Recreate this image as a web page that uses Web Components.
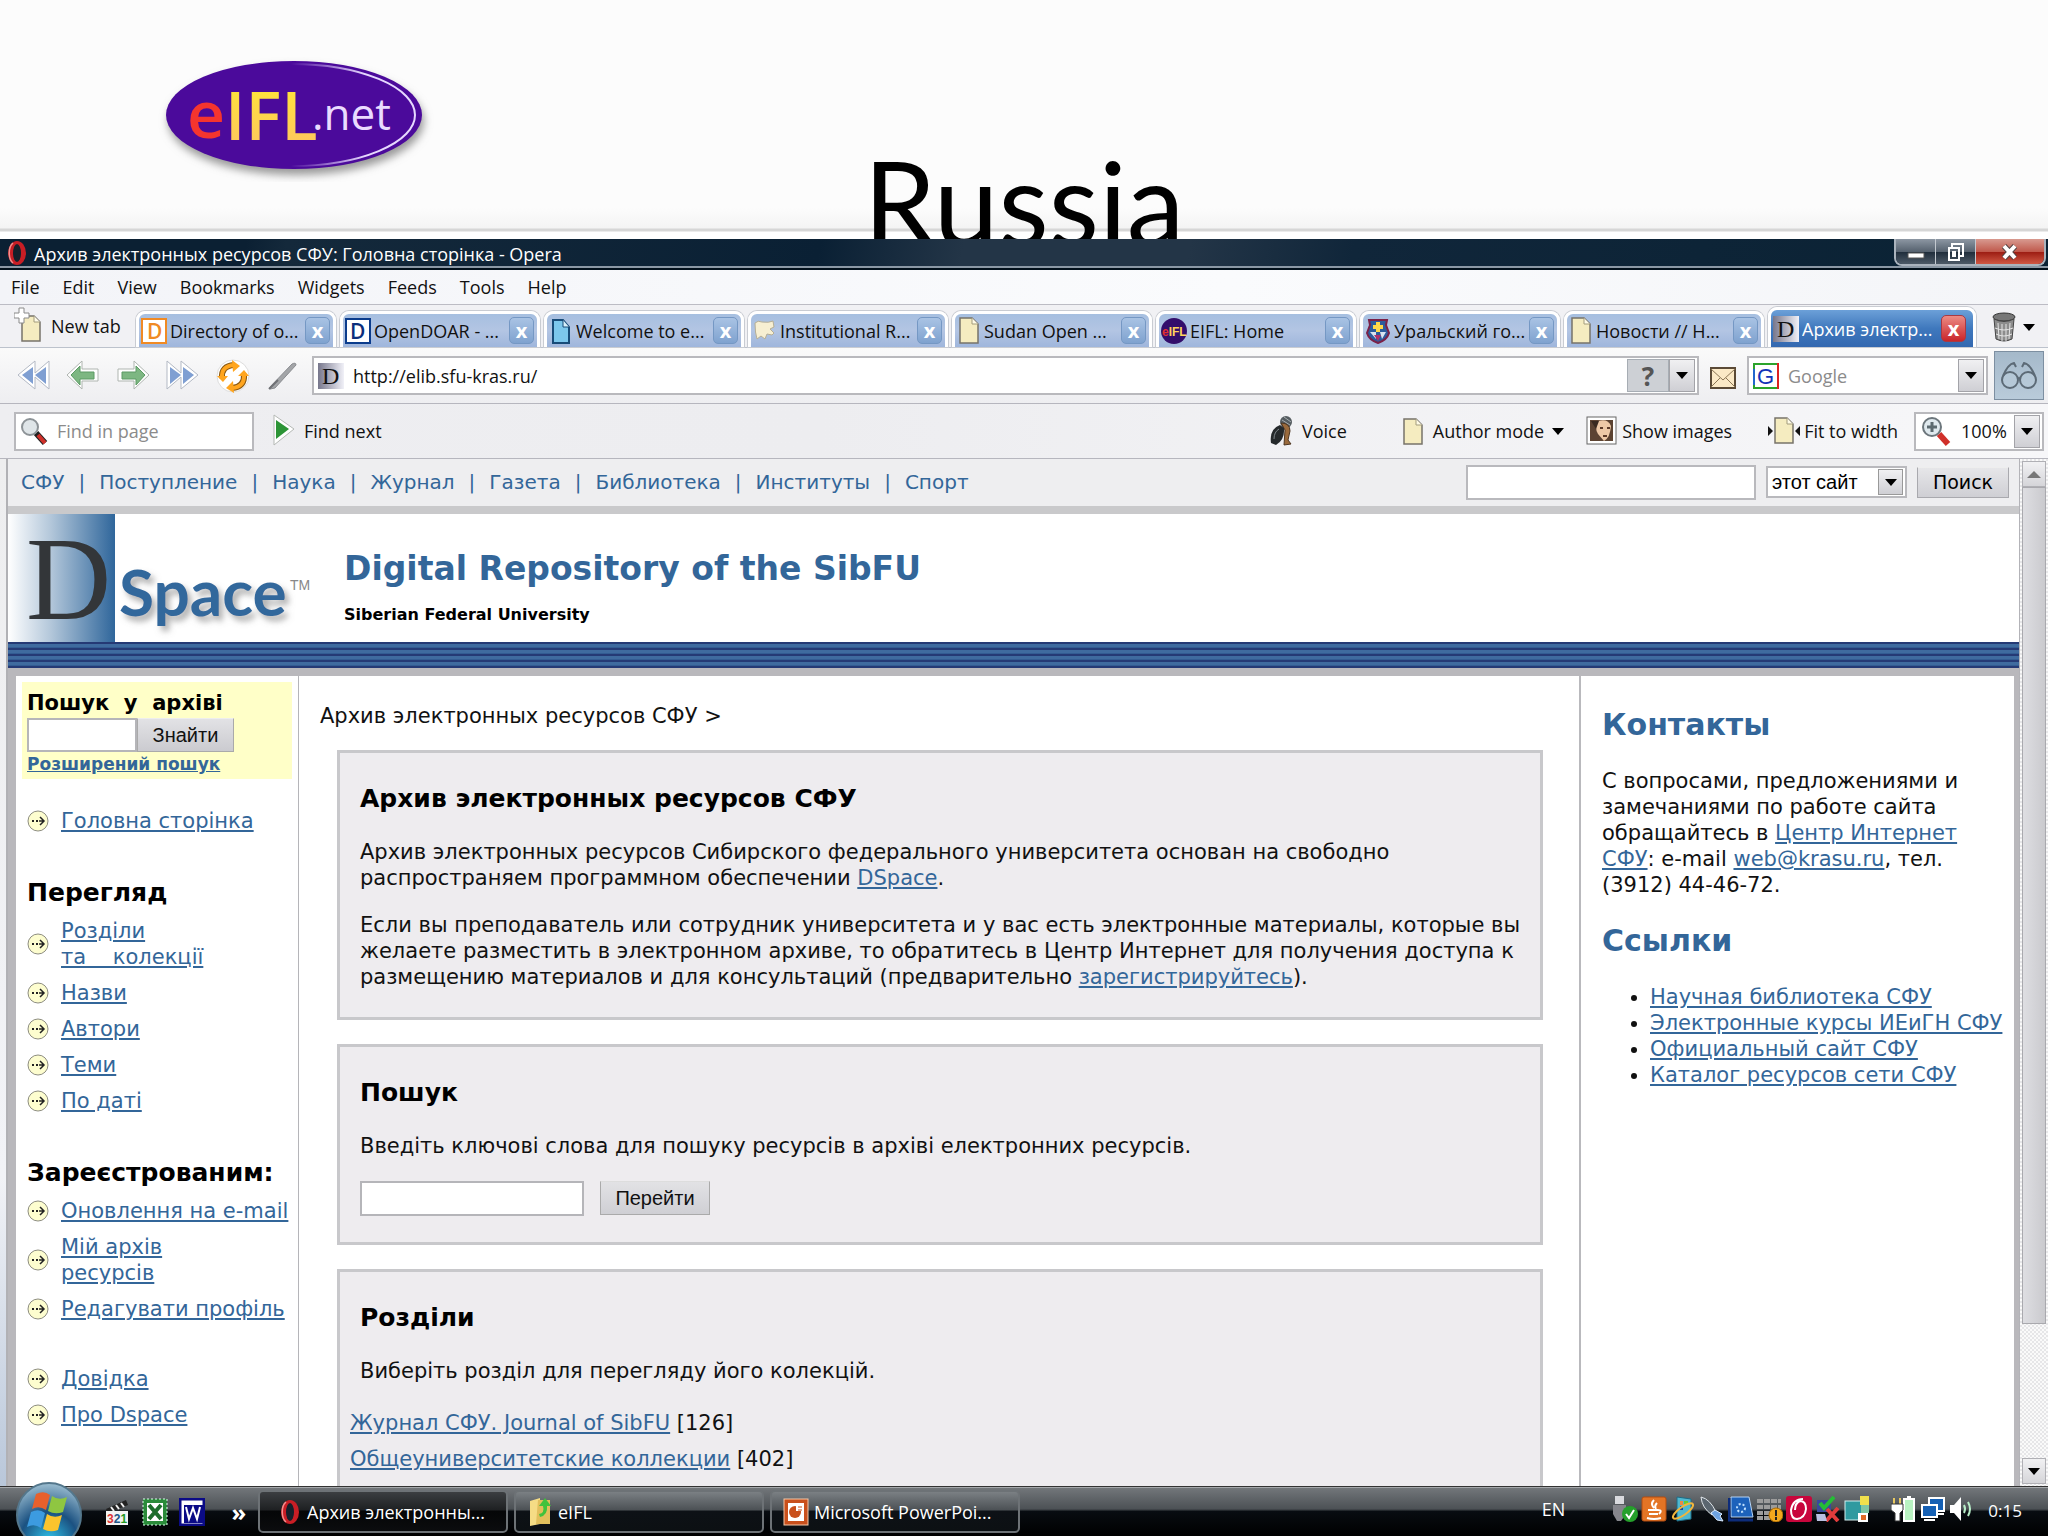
<!DOCTYPE html>
<html lang="uk">
<head>
<meta charset="utf-8">
<title>Russia</title>
<style>
  html, body {
    margin: 0;
    height: 100%;
  }
  body {
    display: flex;
    flex-direction: column;
    overflow: hidden;
    background: #fcfcfc;
    font: 18px "Open Sans", "Noto Sans", sans-serif;
    color: #111;
  }
</style>
</head>
<body>
<slide-banner>Russia</slide-banner>
<opera-window caption="Архив электронных ресурсов СФУ: Головна сторінка - Opera">
  <repo-page></repo-page>
</opera-window>
<task-bar></task-bar>

<script>
const PAGE = `<path d="M3 2h12l6 6v19H3z" fill="#f5ecc0" stroke="#77736a" stroke-width="1.5"/><path d="M15 2v6h6" fill="#fffbe6" stroke="#a39c7c"/>`;

// name: [width, height, markup]
const ICONS = {
  opera: [24, 28, `<ellipse cx="12" cy="14" rx="9" ry="12" fill="#c81e25"/><ellipse cx="12" cy="14" rx="4" ry="9" fill="#15202b"/><path d="M8 4C3 8 3 20 8 24" fill="none" stroke="#f2908f" stroke-width="1.5"/>`],
  page: [24, 29, PAGE],
  newtab: [30, 38, `<g transform="translate(5 7)">${PAGE}</g><path d="M5 1h5v5h5v5h-5v5H5v-5H0V6h5z" fill="#fff" stroke="#8a8a8a"/>`],
  doaj: [26, 26, `<rect x="1" y="1" width="24" height="24" fill="#fff" stroke="#f08a24" stroke-width="2"/><text x="6" y="21" font-family="Open Sans" font-weight="600" font-size="21" fill="#f08a24">D</text>`],
  doar: [26, 26, `<rect x="1" y="1" width="24" height="24" fill="#fff" stroke="#0b3c8c" stroke-width="2"/><text x="5" y="21" font-family="Open Sans" font-weight="600" font-size="21" fill="#0b2f7c">D</text>`],
  bluepage: [24, 26, `<path d="M4 2h10l6 7v16H4z" fill="#7cc7ec" stroke="#174b78" stroke-width="2"/><path d="M14 2v7h6" fill="#d8f1fc" stroke="#174b78"/>`],
  scroll: [24, 24, `<path d="M2 4q3-3 7-1 7 1 11-1l1 6-4 2 4 4-2 2-5-1-2 5-4-3-4 3q-2-6-2-16z" fill="#f7efd2" stroke="#b5ae96"/>`],
  eifl: [26, 26, `<ellipse cx="13" cy="13" rx="13" ry="13" fill="#330e6b"/><text x="1" y="18" font-family="Liberation Sans" font-weight="bold" font-size="12" fill="#e03030">e<tspan fill="#ffd45c">IFL</tspan></text>`],
  crest: [26, 26, `<path d="M4 2h18l-1 5 3 8q-2 7-11 10Q4 22 2 15l3-8z" fill="#2c5c9c" stroke="#7a2148" stroke-width="2"/><path d="M11 4h4v3h3v4h-3v3h-4v-3H8V7h3z" fill="#ffd84a"/><path d="M5 14h6v7zM15 14h6l-4 7z" fill="#d9e4f0"/><path d="M9 17h7l-3 6z" fill="#b0306a"/>`],
  dspace: [26, 26, `<defs><linearGradient id="d"><stop stop-color="#77778c"/><stop offset="1" stop-color="#f1f1f8"/></linearGradient></defs><rect width="26" height="26" fill="url(#d)"/><text x="4" y="21" font-family="Liberation Serif" font-size="24" fill="#111">D</text>`],
  trash: [26, 32, `<ellipse cx="13" cy="6" rx="11" ry="4" fill="#777" stroke="#333"/><path d="M3 8l2 20q8 4 16 0l2-20q-10 5-20 0z" fill="#8c8c8c" stroke="#444"/><path d="M7 12l1 16M11 13v17M15 13v17M19 12l-1 16M4 17q9 4 18 0M5 23q8 4 16 0" stroke="#e4e4e4" fill="none"/>`],
  rewind: [36, 38, `<path d="M34 2v28L20 18v12L3 16 20 2v12z" fill="#fff" stroke="#b3b9c4"/><path d="M18 8v17L7 16zM31 8v17L20 16z" fill="#7f9fd2"/>`],
  forward: [36, 38, `<path d="M2 2v28l14-12v12l17-14L16 2v12z" fill="#fff" stroke="#b3b9c4"/><path d="M18 8v17l11-9zM5 8v17l11-9z" fill="#7f9fd2"/>`],
  back: [36, 38, `<path d="M2 16L17 2v8h16v12H17v8z" fill="#fff" stroke="#afb5b0"/><path d="M6 16l9-9v6h14v7H15v6z" fill="#7db782" stroke="#5c9a64"/>`],
  next: [36, 38, `<path d="M34 16L19 2v8H3v12h16v8z" fill="#fff" stroke="#afb5b0"/><path d="M30 16l-9-9v6H7v7h14v6z" fill="#7db782" stroke="#5c9a64"/>`],
  reload: [36, 38, `<circle cx="18" cy="17" r="16" fill="#fff" stroke="#ddd"/><path d="M7 19q-1-12 12-13M29 15q1 13-12 14" fill="none" stroke="#8b5a14" stroke-width="6"/><path d="M7 19q-1-12 12-13M29 15q1 13-12 14" fill="none" stroke="#ffa51e" stroke-width="4"/><path d="M17 1l8 6-7 6zM19 34l-8-5 7-7zM2 17h11l-5 6zM34 17H23l6-6z" fill="#ffa51e"/>`],
  pen: [36, 38, `<path d="M5 28L27 5q4-2 4 1L10 29l-5 1z" fill="#a3a5a8" stroke="#8a8c90"/><path d="M4 30l9-9" stroke="#6f7175" stroke-width="2"/>`],
  mail: [26, 22, `<rect x="1" y="1" width="24" height="20" fill="#fbe9c6" stroke="#5b4a36" stroke-width="2"/><path d="M1 2l12 11L25 2M1 20l9-9M25 20l-9-9" fill="none" stroke="#8b7554"/>`],
  google: [26, 26, `<rect x="1" y="1" width="24" height="24" fill="#fff" stroke="#2ba32b" stroke-width="2"/><path d="M25 0v26" stroke="#d22" stroke-width="2"/><path d="M1 6v16" stroke="#26c" stroke-width="2"/><text x="4" y="21" font-family="Liberation Sans" font-size="22" fill="#1232b8">G</text>`],
  glasses: [38, 30, `<g fill="#b8cad8" fill-opacity=".7" stroke="#5c6a76" stroke-width="2"><circle cx="10" cy="19" r="8"/><circle cx="28" cy="19" r="8"/></g><path d="M18 18q1-2 2 0M3 15Q8 3 14 2l2 4M35 15Q30 3 24 2l-2 4" fill="none" stroke="#5c6a76" stroke-width="2"/>`],
  search: [28, 28, `<path d="M16 16l9 10" stroke="#222" stroke-width="6"/><path d="M18 18l7 8" stroke="#d0302a" stroke-width="4"/><circle cx="10" cy="10" r="8" fill="#dfe5e8" stroke="#8d9397" stroke-width="2"/>`],
  zoomin: [32, 32, `<path d="M19 19l9 10" stroke="#d0302a" stroke-width="6"/><circle cx="12" cy="12" r="9" fill="#dfe9ee" stroke="#6c767c" stroke-width="2"/><path d="M12 7v10M7 12h10" stroke="#5c6a70" stroke-width="3"/>`],
  play: [24, 34, `<path d="M2 1l20 14L2 31z" fill="#fff" stroke="#b5b9b5"/><path d="M4 6l13 9L4 25z" fill="#2c9436"/>`],
  voice: [26, 32, `<circle cx="18" cy="7" r="6" fill="#555c60"/><path d="M14 5l8 5M16 2l7 5" stroke="#a5abae"/><path d="M13 8q9 0 9 8l-2 9 3 4-7 1 1-15z" fill="#9a6a3c" stroke="#4d3520"/><path d="M3 28q-2-14 9-18l4 3q1 12-8 17z" fill="#25292b"/><path d="M6 24q0-7 5-10" stroke="#7c8488" fill="none"/>`],
  photo: [32, 30, `<rect x="1" y="1" width="29" height="27" fill="#fff" stroke="#666"/><rect x="4" y="4" width="23" height="21" fill="#5c4332"/><path d="M12 5q10-3 13 5-1 12-7 15l-6-7q-4-7 0-13z" fill="#eec9a6"/><path d="M5 5h8l-3 8z" fill="#3a2a20"/><path d="M14 12h3M21 12h3M17 20h4" stroke="#5c3a28" stroke-width="2"/>`],
  fit: [32, 30, `<path d="M0 10l5 5-5 5zM32 10l-5 5 5 5z" fill="#111"/><g transform="translate(4 0)">${PAGE}</g>`],
  bullet: [22, 22, `<circle cx="11" cy="11" r="10" fill="#fdfdcf" stroke="#8d8d80"/><path d="M5 11h2M9 11h2" stroke="#222" stroke-width="2"/><path d="M12 11h4M13 7l4 4-4 4" stroke="#222" stroke-width="1.5" fill="none"/>`],
  clapper: [28, 30, `<path d="M3 12l20-9 2 5-20 8z" fill="#222"/><path d="M8 10l3 4M13 8l3 4M18 6l3 4" stroke="#eee" stroke-width="2"/><rect x="3" y="14" width="22" height="14" fill="#f3f3f3"/><text x="4" y="26" font-family="Liberation Sans" font-weight="bold" font-size="12" fill="#d33">3<tspan fill="#258">2</tspan><tspan fill="#292">1</tspan></text>`],
  excel: [26, 28, `<rect x="1" y="1" width="24" height="26" fill="#2b8b3a" stroke="#dfe" stroke-dasharray="2 2"/><rect x="5" y="5" width="16" height="18" fill="#fff"/><path d="M7 7l12 14M19 7L7 21" stroke="#1d6d2b" stroke-width="4"/>`],
  word: [26, 28, `<rect x="1" y="1" width="24" height="26" fill="#fff" stroke="#0b0b86" stroke-width="3"/><rect x="5" y="7" width="19" height="18" fill="#0b0b86"/><path d="M7 9l3 12 4-11 4 11 3-12" fill="none" stroke="#fff" stroke-width="2"/>`],
  folder: [26, 32, `<path d="M3 5l10-3v26l-10 2z" fill="#f5dc85"/><path d="M11 4h12v24H9z" fill="#e2bf5c"/><path d="M12 18q6-1 4-8h-4l6-8 6 8h-4q1 9-7 11z" fill="#40c23c"/>`],
  ppt: [26, 28, `<rect x="1" y="1" width="24" height="26" fill="#c9501c" stroke="#f4c7a8"/><rect x="5" y="5" width="16" height="18" fill="#fff"/><circle cx="12" cy="14" r="6" fill="#c9501c"/><path d="M13 13V6q6 1 6 7z" fill="#fff"/><path d="M15 9h4M15 12h4" stroke="#c9501c"/>`],
  usb: [26, 26, `<path d="M3 0h9v8H3z" fill="#d9dade"/><path d="M1 9h13v9l-5 7H5l-4-7z" fill="#85868c"/><circle cx="18" cy="18" r="8" fill="#25a02b"/><path d="M14 18l3 4 5-8" fill="none" stroke="#fff" stroke-width="2"/>`],
  java: [26, 26, `<rect x="1" y="1" width="24" height="24" rx="2" fill="#e37425" stroke="#b44d10"/><path d="M13 4q-4 4 0 8M16 7q-3 3-1 6M7 14h10q5 0 1 4M8 18h9M6 22q7 2 14 0" fill="none" stroke="#fff" stroke-width="2"/>`],
  update: [26, 26, `<path d="M7 1l14 2v20l-14 2z" fill="#50b8d0" stroke="#1c6c86"/><path d="M10 5h3v4h-3z" fill="#e84"/><path d="M14 5h4v4h-4z" fill="#6c3"/><path d="M10 10h3v4h-3z" fill="#249"/><ellipse cx="13" cy="15" rx="12" ry="4" transform="rotate(-35 13 15)" fill="none" stroke="#f0b53d" stroke-width="2"/>`],
  rocket: [26, 26, `<path d="M2 1q9 2 15 15l-4 3Q3 12 2 1z" fill="#5b6670" stroke="#dfe5ea"/><path d="M16 14l7 4-2 2 3 5-6-1-6-7z" fill="#6ea3e2" stroke="#dcecff"/>`],
  chip: [26, 26, `<path d="M3 1h18l4 20H3z" fill="#1d62bb" stroke="#b6d3f4"/><path d="M1 2v22h24" fill="none" stroke="#0d2c7a" stroke-width="3"/><circle cx="13" cy="12" r="4" fill="none" stroke="#bfe0ff" stroke-dasharray="2 2" stroke-width="2"/>`],
  firewall: [26, 26, `<path d="M0 5h24M0 11h24M0 17h20M0 22h16" stroke="#9c9c9c" stroke-width="4" stroke-dasharray="6 1"/><circle cx="19" cy="19" r="7" fill="#f2a71d" stroke="#a86804"/><path d="M19 14v6M19 21v3" stroke="#222" stroke-width="2"/>`],
  avira: [26, 26, `<rect width="26" height="26" rx="3" fill="#c8063c"/><path d="M17 3Q7 3 5 14q0 9 6 9 8-1 9-10 0-8-6-8-5 2-5 9" fill="none" stroke="#fff" stroke-width="2"/>`],
  sync: [26, 26, `<path d="M2 4h14v12H2z" fill="#39499b"/><path d="M5 7l4 5L19 1" fill="none" stroke="#25bd36" stroke-width="4"/><path d="M12 13l11 12M23 12L11 25" stroke="#e23c3c" stroke-width="4"/><path d="M1 18h9l2 7H2z" fill="#b9bfe0"/>`],
  gadget: [26, 26, `<rect x="1" y="5" width="17" height="19" fill="#2f9aa0" stroke="#d4efef"/><rect x="16" y="0" width="9" height="9" fill="#f0e04c"/><rect x="17" y="9" width="8" height="8" fill="#7fc7a4"/><rect x="14" y="17" width="10" height="9" fill="#fff"/><rect x="17" y="19" width="5" height="5" fill="#e06a26"/>`],
  power: [26, 26, `<rect x="13" y="3" width="10" height="22" fill="#b9f3c2" stroke="#fff" stroke-width="2"/><path d="M16 0h4v3h-4z" fill="#fff"/><path d="M3 2v6M9 2v6" stroke="#e8c860" stroke-width="2"/><path d="M0 8h12v6l-3 3v8H4v-8l-4-3z" fill="#fff" stroke="#333"/>`],
  network: [26, 26, `<g fill="#1560b4" stroke="#fff" stroke-width="2"><rect x="9" y="2" width="15" height="13"/><rect x="2" y="9" width="15" height="12"/></g><path d="M4 24h11M18 18h6" stroke="#fff" stroke-width="2"/>`],
  sound: [26, 26, `<path d="M1 9h4l7-8v24l-7-8H1z" fill="#fff"/><path d="M15 9q2 4 0 8M19 6q4 7 0 14" fill="none" stroke="#b9efc9" stroke-width="2"/>`]
};

// shared by every element below
const BASE = `
  <style>
    * { box-sizing: border-box; }
    button, input, select { font: inherit; color: inherit; margin: 0; border-radius: 0; }
    button { padding: 0; border: 0; background: none; white-space: nowrap; }
    input::placeholder { color: #8b8b8b; opacity: 1; }
    .arrow::before {
      content: "";
      display: block;
      margin: auto;
      width: 0;
      border: 6px solid transparent;
      border-top: 7px solid #000;
      border-bottom: 0;
    }
  </style>`;

function define(name, render) {
  customElements.define(name, class extends HTMLElement {
    connectedCallback() {
      if (this.shadowRoot) return;
      this.attachShadow({ mode: "open" });
      this.shadowRoot.innerHTML = BASE + render(this);
    }
  });
}

define("ui-icon", el => {
  const [w, h, markup] = ICONS[el.getAttribute("name")];
  return `
    <style>
      :host { display: inline-flex; flex: none; }
      svg { display: block; }
    </style>
    <svg width="${w}" height="${h}" viewBox="0 0 ${w} ${h}" aria-hidden="true">${markup}</svg>`;
});

define("slide-banner", () => `
  <style>
    :host {
      display: grid;
      grid-template-columns: 1fr auto 1fr;
      flex: none;
      height: 239px;
      overflow: hidden;
      background: linear-gradient(#fcfcfc 0 208px, #f4f4f4 228px, #d6d6d6 229px 231px, #fff 232px);
    }
    .logo { margin: 52px 0 0 158px; }
    h1 {
      margin: 0;
      padding-top: 138px;
      font: 400 116px/128px Lato, sans-serif;
      color: #000;
    }
  </style>
  <div class="logo">
    <svg width="280" height="130" viewBox="0 0 280 130" role="img" aria-label="eIFL.net">
      <defs>
        <filter id="soft"><feGaussianBlur stdDeviation="4"/></filter>
        <linearGradient id="rim"><stop offset=".5" stop-color="#e6d8ff" stop-opacity="0"/><stop offset=".8" stop-color="#e6d8ff"/></linearGradient>
        <linearGradient id="gold" x2="0" y2="1"><stop stop-color="#ffec2e"/><stop offset="1" stop-color="#ffc067"/></linearGradient>
      </defs>
      <ellipse cx="138" cy="69" rx="128" ry="54" fill="#999" filter="url(#soft)"/>
      <ellipse cx="136" cy="63" rx="128" ry="54" fill="#4b0a9b"/>
      <ellipse cx="133" cy="63" rx="124" ry="51" fill="none" stroke="url(#rim)" stroke-width="2"/>
      <g font-family="Open Sans">
        <text x="29" y="86" font-size="66" font-weight="600" fill="#f5352e">e</text>
        <text x="67" y="88" font-size="67" font-weight="600" fill="url(#gold)">IFL</text>
        <text x="154" y="78" font-size="44" font-weight="500" fill="#eadbff">.net</text>
      </g>
    </svg>
  </div>
  <h1><slot></slot></h1>`);

define("browser-tab", el => `
  <style>
    :host { display: flex; flex: 1 1 0; min-width: 0; }
    :host([active]) { flex-grow: 1.04; }
    .tab {
      display: flex;
      align-items: center;
      gap: 3px;
      flex: 1;
      min-width: 0;
      height: 36px;
      padding: 0 3px 0 2px;
      border: solid #fff;
      border-width: 3px 3px 0;
      border-radius: 9px 9px 0 0;
      background: linear-gradient(#a6bfe0, #b3c5e3 50%, #9fb6dc);
      box-shadow: 0 0 0 1px #c9ccd2;
    }
    :host([active]) .tab {
      height: 40px;
      padding-right: 7px;
      background: linear-gradient(#6ca0d8, #3f78bd 50%, #3368b0);
      color: #fff;
    }
    .label { flex: 1; overflow: hidden; white-space: nowrap; }
    button {
      width: 25px;
      height: 27px;
      border: 1px solid #7598c4;
      border-radius: 5px;
      background: linear-gradient(#a9c3e4, #7fa2cf);
      color: #fff;
      font: bold 20px/22px "Open Sans", sans-serif;
    }
    :host([active]) button { background: linear-gradient(#ec8b84, #c9252a); border-color: #a83a44; }
  </style>
  <div class="tab">
    <ui-icon name="${el.getAttribute("icon")}"></ui-icon>
    <span class="label">${el.getAttribute("label")}</span>
    <button aria-label="Close tab">x</button>
  </div>`);

define("opera-window", el => `
  <style>
    :host { display: flex; flex-direction: column; flex: 1; min-height: 0; background: #f1f1f4; }
    .title {
      display: flex;
      flex: none;
      height: 31px;
      padding-left: 5px;
      gap: 5px;
      background: linear-gradient(100deg, #0b2033 0 12%, #14293b 14%, #0a2034 40%, #233547 47% 58%, #10263a 66%, #0a2234);
      border-bottom: 2px solid #02101b;
      box-shadow: inset 0 -2px #8b98a5;
      color: #fff;
      line-height: 30px;
    }
    .title span { flex: 1; }
    .controls { display: flex; height: 27px; margin-right: 2px; border: 2px solid #aab3bd; border-top: 0; border-radius: 0 0 8px 8px; overflow: hidden; }
    .controls button { display: grid; place-items: center; width: 40px; border-right: 1px solid #c3c9d0; background: linear-gradient(#8d97a3, #56626f 50%, #1f2d3b 52%, #4d5a67); }
    .controls button:last-child { width: 68px; border: 0; background: linear-gradient(#d89a90, #c05a4d 50%, #9c1c12 52%, #cf5844); }
    .menu { display: flex; align-items: center; flex: none; gap: 23px; height: 35px; padding-left: 11px; background: linear-gradient(90deg, #f3f4f8, #fafbfd 60%, #f4f5f8); border-bottom: 1px solid #bcbcc4; line-height: 30px; }
    .tabs { display: flex; align-items: flex-end; flex: none; gap: 4px; height: 43px; padding-left: 14px; border-bottom: 1px solid #bcc2cc; }
    .new { display: flex; align-items: center; gap: 7px; width: 118px; height: 42px; }
    .bin { display: flex; align-items: center; gap: 6px; width: 68px; height: 40px; padding-left: 11px; }
    .bar { display: flex; align-items: center; flex: none; height: 56px; border-bottom: 1px solid #b6b6be; }
    .address { padding: 0 4px 0 15px; gap: 14px; background: linear-gradient(#fafafa, #eeeef1); }
    .address > button { display: flex; padding-top: 4px; }
    .find { height: 55px; padding: 0 4px 0 14px; background: linear-gradient(90deg, #eeeef1, #ededf0 40%, #f7f7f9); }
    .find > button, .group button { display: flex; align-items: center; gap: 8px; }
    .field { display: flex; align-items: center; height: 39px; padding: 2px; border: 2px solid #b9b9bd; background: #fff; min-width: 0; }
    .field input, .field select { flex: 1; min-width: 0; height: 33px; border: 0; padding: 0 0 0 9px; outline: 0; background: none; appearance: none; }
    .field ui-icon { margin-left: 2px; }
    .drop { width: 26px; height: 33px; border: 1px solid #a3a3a8; background: linear-gradient(#f0f0f2, #cfcfd4); }
    .url { flex: 1; margin-left: -3px; }
    .help { width: 42px; height: 33px; border: 1px solid #a7adb4; background: #cdd0d5; color: #555; font-weight: bold; font-size: 26px; line-height: 28px; }
    .google { width: 241px; }
    .address .glass { display: grid; place-items: center; width: 50px; height: 49px; padding: 0; margin-left: -8px; border: 1px solid #7d8fa1; background: linear-gradient(#a5b9ca, #b9cbda); }
    .google, .mail { margin-left: -3px; }
    .page-find { width: 240px; margin-right: 18px; }
    .group { display: flex; align-items: center; margin-left: auto; }
    .mode { margin-left: 54px; }
    .show { margin-left: 22px; }
    .group .show, .group .width { gap: 4px; }
    .width { margin-left: 36px; }
    .zoom { width: 130px; margin-left: 16px; }
    .view { display: flex; flex: 1; min-height: 0; padding-left: 6px; background: linear-gradient(#eeeeef, #f2f3f7 70%, #b9c7da); }
    .content { flex: 1; min-width: 0; overflow: hidden; border-left: 2px solid #b1b1b5; background: #fff; }
    .scroll { display: flex; flex-direction: column; width: 29px; padding: 2px; border-left: 1px solid #b3b3b8; background: repeating-conic-gradient(#e6e6e8 0 25%, #fafafa 0 50%) 0 0 / 4px 4px; }
    .scroll button { flex: none; height: 26px; border: 1px solid #b0b0b5; background: linear-gradient(#f1f1f3, #d5d5d9); }
    .up::before { content: ""; display: block; margin: auto; width: 0; border: 7px solid transparent; border-top: 0; border-bottom: 7px solid #777; }
    .thumb { flex: 838; border: 1px solid #a9a9ae; background: linear-gradient(90deg, #dedee2, #cacace); }
    .track { flex: 134; }
  </style>
  <div class="title">
    <ui-icon name="opera"></ui-icon>
    <span>${el.getAttribute("caption")}</span>
    <div class="controls">
      <button aria-label="Minimize"><svg width="18" height="20"><path d="M1 11h16v5H1z" fill="#fff" stroke="#555"/></svg></button>
      <button aria-label="Restore"><svg width="20" height="20" fill="none" stroke="#fff" stroke-width="2"><path d="M6 5V2h11v12h-3"/><path d="M3 6h10v12H3zM7 10h2v4H7z"/></svg></button>
      <button aria-label="Close"><svg width="18" height="18"><path d="M3 3l11 12M14 3L3 15" stroke="#544" stroke-width="6"/><path d="M3 3l11 12M14 3L3 15" stroke="#fff" stroke-width="4"/></svg></button>
    </div>
  </div>
  <nav class="menu">
    ${["File", "Edit", "View", "Bookmarks", "Widgets", "Feeds", "Tools", "Help"].map(m => `<button>${m}</button>`).join("")}
  </nav>
  <div class="tabs">
    <button class="new"><ui-icon name="newtab"></ui-icon>New tab</button>
    <browser-tab icon="doaj" label="Directory of o..."></browser-tab>
    <browser-tab icon="doar" label="OpenDOAR - ..."></browser-tab>
    <browser-tab icon="bluepage" label="Welcome to e..."></browser-tab>
    <browser-tab icon="scroll" label="Institutional R..."></browser-tab>
    <browser-tab icon="page" label="Sudan Open ..."></browser-tab>
    <browser-tab icon="eifl" label="EIFL: Home"></browser-tab>
    <browser-tab icon="crest" label="Уральский го..."></browser-tab>
    <browser-tab icon="page" label="Новости // Н..."></browser-tab>
    <browser-tab icon="dspace" label="Архив электр..." active></browser-tab>
    <button class="bin" aria-label="Closed tabs"><ui-icon name="trash"></ui-icon><span class="arrow"></span></button>
  </div>
  <div class="bar address">
    <button aria-label="Rewind"><ui-icon name="rewind"></ui-icon></button>
    <button aria-label="Back"><ui-icon name="back"></ui-icon></button>
    <button aria-label="Forward"><ui-icon name="next"></ui-icon></button>
    <button aria-label="Fast forward"><ui-icon name="forward"></ui-icon></button>
    <button aria-label="Reload"><ui-icon name="reload"></ui-icon></button>
    <button aria-label="Wand"><ui-icon name="pen"></ui-icon></button>
    <div class="field url">
      <ui-icon name="dspace"></ui-icon>
      <input aria-label="Address" value="http://elib.sfu-kras.ru/">
      <button class="help" aria-label="Site information">?</button>
      <button class="drop arrow" aria-label="Address history"></button>
    </div>
    <button class="mail" aria-label="Mail"><ui-icon name="mail"></ui-icon></button>
    <div class="field google">
      <ui-icon name="google"></ui-icon>
      <input aria-label="Web search" placeholder="Google">
      <button class="drop arrow" aria-label="Search engines"></button>
    </div>
    <button class="glass" aria-label="View bar"><ui-icon name="glasses"></ui-icon></button>
  </div>
  <div class="bar find">
    <div class="field page-find"><ui-icon name="search"></ui-icon><input aria-label="Find in page" placeholder="Find in page"></div>
    <button><ui-icon name="play"></ui-icon>Find next</button>
    <div class="group">
      <button><ui-icon name="voice"></ui-icon>Voice</button>
      <button class="mode"><ui-icon name="page"></ui-icon>Author mode<span class="arrow"></span></button>
      <button class="show"><ui-icon name="photo"></ui-icon>Show images</button>
      <button class="width"><ui-icon name="fit"></ui-icon>Fit to width</button>
      <div class="field zoom"><ui-icon name="zoomin"></ui-icon><select aria-label="Zoom"><option>100%</option></select><button class="drop arrow" aria-label="Zoom levels"></button></div>
    </div>
  </div>
  <div class="view">
    <div class="content"><slot></slot></div>
    <div class="scroll">
      <button class="up" aria-label="Scroll up"></button>
      <div class="thumb"></div>
      <div class="track"></div>
      <button class="arrow" aria-label="Scroll down"></button>
    </div>
  </div>`);

define("site-nav", () => `
  <style>
    :host { display: flex; align-items: center; height: 55px; padding: 0 10px 1px 13px; border-bottom: 8px solid #c9c9cb; background: #eeeef0; color: #369; font-size: 20px; }
    nav { display: flex; flex: 1; gap: 14px; }
    a { color: inherit; text-decoration: none; }
    a + a::before { content: "|"; margin-right: 14px; }
    form { display: flex; align-items: center; gap: 10px; color: #000; }
    input { width: 290px; height: 35px; border: 2px solid #b9b9bd; background: #fff; }
    .pick { display: flex; align-items: center; width: 141px; height: 32px; padding-right: 2px; border: 2px solid #b9b9bd; background: #fff; }
    select { flex: 1; min-width: 0; padding: 0 0 0 4px; border: 0; appearance: none; background: none; font: 20px "Liberation Sans", sans-serif; }
    .pick .arrow { width: 25px; height: 26px; padding-top: 9px; border: 1px solid #999; background: linear-gradient(#f0f0f2, #cfcfd4); }
    button { width: 92px; height: 31px; border: 1px solid #a9a9ae; border-top-color: #eee; background: linear-gradient(#e6e6e9, #cfcfd4); font-size: 19px; }
  </style>
  <nav>${["СФУ", "Поступление", "Наука", "Журнал", "Газета", "Библиотека", "Институты", "Спорт"].map(t => `<a href="#">${t}</a>`).join("")}</nav>
  <form>
    <input aria-label="Поиск по сайту">
    <div class="pick"><select aria-label="Область поиска"><option>этот сайт</option></select><span class="arrow"></span></div>
    <button type="button">Поиск</button>
  </form>`);

define("repo-header", () => `
  <style>
    :host { display: block; }
    .head { display: flex; height: 128px; }
    .logo { flex: none; width: 336px; overflow: visible; }
    h1 { margin: 35px 0 0; font-size: 33px; line-height: 40px; color: #369; }
    p { margin: 15px 0 0; font-size: 16px; line-height: 22px; font-weight: bold; color: #000; }
    .stripes { height: 26px; background: repeating-linear-gradient(#253a75 0 2px, #3f6b9f 2px 5px, #335c93 5px 6px); }
  </style>
  <div class="head">
    <svg class="logo" width="336" height="128" viewBox="0 0 336 128" role="img" aria-label="DSpace">
      <defs>
        <linearGradient id="sky"><stop stop-color="#fff"/><stop offset=".4" stop-color="#b3c7da"/><stop offset="1" stop-color="#2f669b"/></linearGradient>
        <filter id="drop" x="-10%" y="-10%" width="130%" height="140%"><feDropShadow dx="4" dy="5" stdDeviation="3" flood-color="#777" flood-opacity=".6"/></filter>
      </defs>
      <rect width="107" height="128" fill="url(#sky)"/>
      <text x="18" y="105" font-family="Liberation Serif" font-size="118" fill="#333639">D</text>
      <text x="111" y="102" font-family="Lato" font-weight="bold" font-size="64" fill="#33689c" filter="url(#drop)">Space</text>
      <text x="282" y="76" font-family="Liberation Sans" font-size="14" fill="#888">TM</text>
    </svg>
    <div>
      <h1>Digital Repository of the SibFU</h1>
      <p>Siberian Federal University</p>
    </div>
  </div>
  <div class="stripes"></div>`);

define("side-link", () => `
  <style>
    :host { display: flex; align-items: center; gap: 12px; min-height: 36px; padding: 5px 0; line-height: 26px; }
    a { color: #369; white-space: pre-line; }
  </style>
  <ui-icon name="bullet"></ui-icon><a href="#"><slot></slot></a>`);

define("side-bar", () => `
  <style>
    :host { display: block; padding: 6px; border-right: 1px solid #b5b5b9; white-space: nowrap; }
    .search { height: 97px; padding: 6px 6px 0 5px; background: #ffffc8; font-weight: bold; white-space: pre; line-height: 30px; color: #000; }
    .row { display: flex; height: 34px; }
    input { width: 110px; border: 2px solid #b5b5b9; background: #fff; }
    button { width: 97px; border: 1px solid #aaa; border-top-color: #eee; background: linear-gradient(#e2e2e5, #cbcbd0); font: 20px "Liberation Sans", sans-serif; color: #111; }
    .search a { display: block; color: #369; font-size: 17px; line-height: 24px; }
    .links { padding: 24px 0 0 5px; }
    h2 { margin: 0; padding-top: 34px; font-size: 25px; line-height: 40px; color: #000; }
    .spacer { height: 34px; }
  </style>
  <form class="search"><label for="q">Пошук  у  архіві</label><div class="row"><input id="q"><button type="button">Знайти</button></div><a href="#">Розширений пошук</a></form>
  <div class="links">
    <side-link>Головна сторінка</side-link>
    <h2>Перегляд</h2>
    <side-link>Розділи<br>та&nbsp;&nbsp; &nbsp;колекції</side-link>
    <side-link>Назви</side-link>
    <side-link>Автори</side-link>
    <side-link>Теми</side-link>
    <side-link>По даті</side-link>
    <h2>Зареєстрованим:</h2>
    <side-link>Оновлення на e-mail</side-link>
    <side-link>Мій архів<br>ресурсів</side-link>
    <side-link>Редагувати профіль</side-link>
    <div class="spacer"></div>
    <side-link>Довідка</side-link>
    <side-link>Про Dspace</side-link>
  </div>`);

define("content-box", el => `
  <style>
    :host { display: block; padding: 26px 8px 6px 20px; border: 3px solid #c8c8cb; background: #eeecef; }
    h2 { margin: 0 0 20px; font-size: 25px; line-height: 40px; color: #000; }
  </style>
  <h2>${el.getAttribute("heading")}</h2>
  <slot></slot>`);

define("repo-main", () => `
  <style>
    :host { display: block; padding: 27px 36px 0 38px; }
    .crumb { margin: 0 0 21px -17px; }
    content-box { margin-bottom: 24px; }
    p { margin: 0 0 21px; }
    a { color: #369; }
    form { display: flex; align-items: center; gap: 16px; height: 36px; margin-bottom: 20px; }
    input { width: 224px; height: 35px; border: 2px solid #b5b5b9; background: #fff; }
    button { width: 110px; height: 34px; border: 1px solid #aaa; border-top-color: #ddd; background: linear-gradient(#e2e2e5, #cfcfd4); font: 20px "Liberation Sans", sans-serif; }
    ul { list-style: none; margin: 0 0 0 -10px; padding: 0 0 80px; line-height: 36px; }
  </style>
  <p class="crumb">Архив электронных ресурсов СФУ &gt;</p>
  <content-box heading="Архив электронных ресурсов СФУ">
    <p>Архив электронных ресурсов Сибирского федерального университета основан на свободно<br>распространяем программном обеспечении <a href="#">DSpace</a>.</p>
    <p>Если вы преподаватель или сотрудник университета и у вас есть электронные материалы, которые вы желаете разместить в электронном архиве, то обратитесь в Центр Интернет для получения доступа к размещению материалов и для консультаций (предварительно <a href="#">зарегистрируйтесь</a>).</p>
  </content-box>
  <content-box heading="Пошук">
    <p>Введіть ключові слова для пошуку ресурсів в архіві електронних ресурсів.</p>
    <form><input aria-label="Ключові слова"><button type="button">Перейти</button></form>
  </content-box>
  <content-box heading="Розділи">
    <p>Виберіть розділ для перегляду його колекцій.</p>
    <ul>
      <li><a href="#">Журнал СФУ. Journal of SibFU</a> [126]</li>
      <li><a href="#">Общеуниверситетские коллекции</a> [402]</li>
    </ul>
  </content-box>`);

define("contact-panel", () => `
  <style>
    :host { display: block; padding: 29px 14px 0 21px; border-left: 2px solid #b9b9bd; }
    h2 { margin: 0 0 23px; font-size: 30px; line-height: 40px; color: #369; }
    p { margin: 0 0 23px; }
    a { color: #369; }
    ul { margin: 0; padding-left: 48px; white-space: nowrap; }
  </style>
  <h2>Контакты</h2>
  <p>С вопросами, предложениями и замечаниями по работе сайта обращайтесь в <a href="#">Центр Интернет СФУ</a>: e-mail <a href="#">web@krasu.ru</a>, тел. (3912) 44-46-72.</p>
  <h2>Ссылки</h2>
  <ul>
    <li><a href="#">Научная библиотека СФУ</a></li>
    <li><a href="#">Электронные курсы ИЕиГН СФУ</a></li>
    <li><a href="#">Официальный сайт СФУ</a></li>
    <li><a href="#">Каталог ресурсов сети СФУ</a></li>
  </ul>`);

define("repo-page", () => `
  <style>
    :host { display: flex; flex-direction: column; height: 100%; font: 21px/26px "DejaVu Sans", sans-serif; }
    site-nav, repo-header { flex: none; }
    .columns {
      display: grid;
      grid-template-columns: 283px 1fr 435px;
      flex: 1;
      min-height: 0;
      border: solid #b9b8bc;
      border-width: 8px 5px 0 8px;
      background: #fff;
    }
  </style>
  <site-nav></site-nav>
  <repo-header></repo-header>
  <div class="columns">
    <side-bar></side-bar>
    <repo-main></repo-main>
    <contact-panel></contact-panel>
  </div>`);

define("task-bar", () => `
  <style>
    :host {
      display: flex;
      align-items: center;
      flex: none;
      height: 49px;
      position: relative;
      padding: 0 26px 0 16px;
      border-top: 1px solid #333;
      box-shadow: inset 0 1px #a4a7aa;
      background: linear-gradient(#74787c, #4c5155 45%, #080c11 50%, #000);
      color: #fff;
    }
    .orb { align-self: flex-end; height: 54px; margin-right: 21px; }
    .quick { display: flex; align-items: center; gap: 11px; width: 155px; }
    .more { width: 26px; height: 42px; margin-left: 10px; font: bold 24px/24px "Open Sans", sans-serif; }
    .task { display: flex; align-items: center; gap: 5px; width: 250px; height: 43px; margin-right: 6px; padding-left: 18px; border: 2px solid #6d7276; border-radius: 5px; background: linear-gradient(#7b8084, #4d5256 45%, #0d1116 50%, #0c1013); }
    .task.on { background: linear-gradient(#3b3e41, #1f2123 45%, #050607 50%, #0b0c0e); }
    .task.low { padding-left: 11px; }
    .tray { display: flex; align-items: center; gap: 3px; margin-left: auto; padding-bottom: 5px; }
    .lang { margin-right: 44px; }
    .gap { width: 15px; }
    .clock { margin-left: 10px; font-size: 17px; padding-top: 3px; }
  </style>
  <button class="orb" aria-label="Start">
    <svg width="66" height="54" viewBox="0 0 66 54">
      <defs><radialGradient id="o" cx=".5" cy=".9" r=".9"><stop stop-color="#2fc3ea"/><stop offset=".5" stop-color="#1b5181"/><stop offset="1" stop-color="#9dbfd2"/></radialGradient></defs>
      <circle cx="33" cy="33" r="32" fill="url(#o)" stroke="#54778c" stroke-width="2"/>
      <path d="M20 12q8-4 14 1l-4 15q-7-5-14-1z" fill="#e8602c"/>
      <path d="M36 14q7 5 15 1l-4 15q-8 3-15-1z" fill="#8fc641"/>
      <path d="M15 30q8-4 14 1l-4 15q-7-5-14-1z" fill="#3c9be0"/>
      <path d="M31 32q7 5 15 1l-4 15q-8 3-15-1z" fill="#fbc42d"/>
    </svg>
  </button>
  <div class="quick">
    <ui-icon name="clapper"></ui-icon><ui-icon name="excel"></ui-icon><ui-icon name="word"></ui-icon>
    <button class="more" aria-label="More">»</button>
  </div>
  <button class="task on"><ui-icon name="opera"></ui-icon>Архив электронны...</button>
  <button class="task low"><ui-icon name="folder"></ui-icon>eIFL</button>
  <button class="task low"><ui-icon name="ppt"></ui-icon>Microsoft PowerPoi...</button>
  <div class="tray">
    <span class="lang">EN</span>
    ${["usb", "java", "update", "rocket", "chip", "firewall", "avira", "sync", "gadget"].map(n => `<ui-icon name="${n}"></ui-icon>`).join("")}
    <span class="gap"></span>
    <ui-icon name="power"></ui-icon><ui-icon name="network"></ui-icon><ui-icon name="sound"></ui-icon>
    <span class="clock">0:15</span>
  </div>`);
</script>
</body>
</html>
